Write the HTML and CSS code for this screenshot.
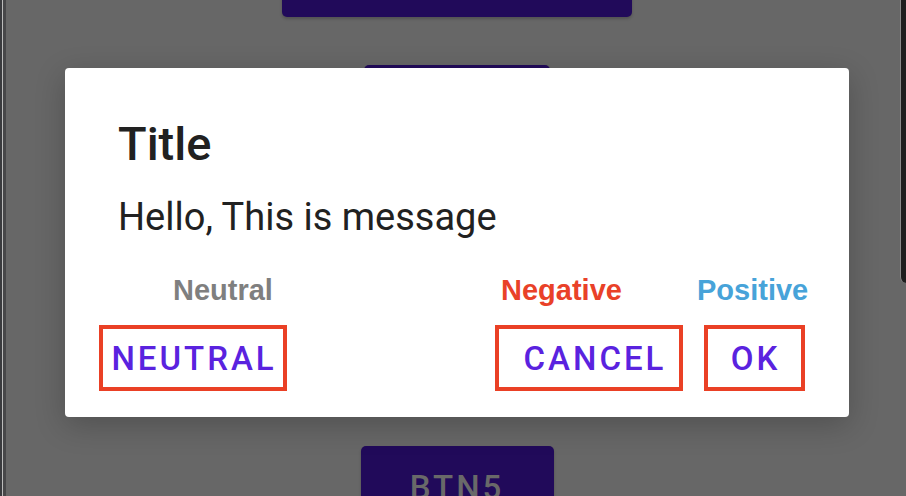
FILE: index.html
```html
<!DOCTYPE html>
<html lang="en">
<head>
    <meta charset="UTF-8">
    <meta name="viewport" content="width=device-width, initial-scale=1.0">
    <title>Dialog Buttons</title>
    <link rel="stylesheet" href="styles.css">
</head>
<body>

<div class="device">
    <div class="bezel-left"></div>

    <!-- Activity behind the dialog (labels of the hidden buttons are off screen / covered) -->
    <div class="screen">
        <button class="btn btn-wide" aria-label="BTN1"></button>
        <button class="btn btn-2" aria-label="BTN2"></button>
        <button class="btn btn-3" aria-label="BTN3"></button>
        <button class="btn btn-4" aria-label="BTN4"></button>
        <button class="btn btn-5">BTN5</button>
    </div>

    <div class="bezel-right"></div>

    <!-- Alert dialog -->
    <div class="dialog">
        <h1 class="dialog-title">Title</h1>
        <p class="dialog-message">Hello, This is message</p>

        <div class="label-row">
            <span class="label label-neutral">Neutral</span>
            <span class="label label-negative">Negative</span>
            <span class="label label-positive">Positive</span>
        </div>

        <div class="button-row">
            <button class="dialog-btn btn-neutral">NEUTRAL</button>
            <div class="spacer"></div>
            <button class="dialog-btn btn-cancel">CANCEL</button>
            <button class="dialog-btn btn-ok">OK</button>
        </div>
    </div>
</div>

</body>
</html>
```

FILE: styles.css
```css
body {
    margin: 0;
    padding: 0;
    background-color: #676767;
    font-family: Roboto, "Noto Sans", sans-serif;
    overflow: hidden;
}

.device {
    position: relative;
    display: flex;
    width: 906px;
    height: 496px;
    overflow: hidden;
}

.bezel-left {
    width: 6px;
    flex-shrink: 0;
    background: linear-gradient(to right, #3a3b3e 0, #3a3b3e 2px, #bcbcbc 2px, #bcbcbc 3px, #474749 3px, #474749 6px);
}

.screen {
    flex: 1;
    display: flex;
    flex-direction: column;
    align-items: center;
    gap: 48px;
    margin-top: -62px;
    padding-left: 2px;
}

.btn {
    height: 79px;
    flex-shrink: 0;
    border: none;
    border-radius: 5px;
    background-color: #210a5a;
    color: #696969;
    font-family: Roboto, sans-serif;
    font-weight: 500;
    font-size: 33px;
    letter-spacing: 3px;
    box-shadow: 0 2px 3px rgba(0, 0, 0, 0.2);
}

.btn-wide {
    width: 350px;
}

.btn-2 {
    width: 186px;
}

.btn-3, .btn-4 {
    width: 200px;
}

.btn-5 {
    width: 193px;
    padding-top: 4px;
}

.bezel-right {
    position: absolute;
    top: 0;
    right: 0;
    width: 6px;
    height: 283px;
    background-color: #1f1f1f;
    border-left: 1px solid #8a8a8a;
    border-bottom-left-radius: 6px;
    box-sizing: border-box;
}

.dialog {
    position: absolute;
    left: 65px;
    top: 68px;
    width: 784px;
    height: 349px;
    box-sizing: border-box;
    background-color: #fff;
    border-radius: 4px;
    box-shadow: 0 8px 30px rgba(0, 0, 0, 0.22);
    padding-top: 52px;
}

.dialog-title {
    margin: 0 0 31px 53px;
    font-size: 47px;
    line-height: 47px;
    font-weight: 500;
    color: #212121;
}

.dialog-message {
    margin: 0 0 0 53px;
    font-size: 38px;
    line-height: 38px;
    color: #212121;
}

.label-row {
    display: flex;
    margin-top: 40px;
    padding-left: 108px;
    font-family: "Liberation Sans", Arial, sans-serif;
    font-weight: bold;
    font-size: 29px;
    line-height: 29px;
}

.label-neutral {
    width: 328px;
    color: #7f7f7f;
}

.label-negative {
    width: 196px;
    color: #e94128;
}

.label-positive {
    color: #47a3d9;
}

.button-row {
    display: flex;
    margin-top: 20px;
    padding: 0 44px 0 34px;
    gap: 21px;
}

.spacer {
    flex: 1;
}

.dialog-btn {
    height: 66px;
    box-sizing: border-box;
    border: 4px solid #ea4025;
    background: #fff;
    color: #5a22df;
    font-family: Roboto, sans-serif;
    font-weight: 500;
    font-size: 33px;
    letter-spacing: 3px;
    padding: 0;
}

.btn-neutral {
    width: 188px;
    padding-left: 2px;
}

.btn-cancel {
    width: 188px;
    padding-left: 12px;
}

.btn-ok {
    width: 101px;
    padding-left: 2px;
}
```
